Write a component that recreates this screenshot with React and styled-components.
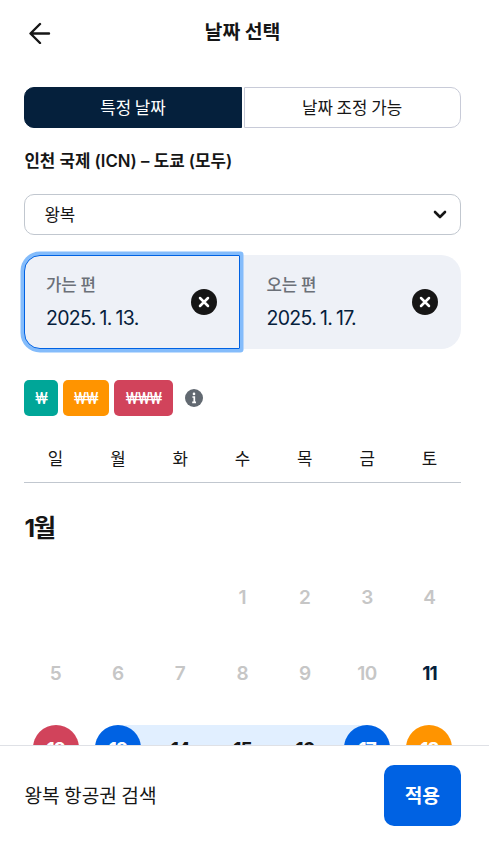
import React from "react";
import styled, { createGlobalStyle, css } from "styled-components";

const GlobalStyle = createGlobalStyle`
  * {
    box-sizing: border-box;
  }
  body {
    margin: 0;
    background: #fff;
    color: #161616;
    font-family: "Inter", "Noto Sans CJK KR", sans-serif;
  }
  button {
    margin: 0;
    padding: 0;
    border: 0;
    background: none;
    color: inherit;
    font: inherit;
    letter-spacing: inherit;
    cursor: pointer;
  }
`;

const Page = styled.div`
  display: flex;
  flex-direction: column;
  width: 489px;
  height: 845px;
  overflow: hidden;
`;

const Content = styled.main`
  flex: 1;
  min-height: 0;
  padding: 0 28.4px 0 24.4px;
  overflow: hidden;
`;

const Header = styled.header`
  display: grid;
  grid-template-columns: 30px 1fr 30px;
  align-items: center;
  height: 66px;
  margin-bottom: 21px;
`;

const BackButton = styled.button`
  display: flex;
  padding-left: 4.6px;
`;

const Title = styled.h1`
  margin: 0;
  padding-bottom: 4px;
  font-family: "Noto Sans CJK KR", sans-serif;
  font-size: 19.4px;
  font-weight: 700;
  line-height: 28px;
  text-align: center;
`;

const Tabs = styled.div`
  display: flex;
  gap: 2px;
  height: 41px;
`;

const Tab = styled.button`
  flex: 1;
  padding-bottom: 2px;
  border: 1px solid #c8cbd8;
  border-radius: 0 10px 10px 0;
  font-family: "Noto Sans CJK KR", sans-serif;
  font-size: 16.8px;
  line-height: 24px;
  ${(props) => props.$active && css`
    border-color: #05203c;
    border-radius: 10px 0 0 10px;
    background: #05203c;
    color: #fff;
  `}
`;

const Route = styled.h2`
  margin: 21px 0;
  font-size: 16.8px;
  font-weight: 600;
  line-height: 24px;
`;

const Select = styled.button`
  display: flex;
  align-items: center;
  justify-content: space-between;
  width: 100%;
  height: 41px;
  padding: 0 12.5px 1px 19px;
  border: 1px solid #c1c7cf;
  border-radius: 10px;
  font-size: 16.8px;
`;

const Dates = styled.div`
  display: flex;
  height: 94px;
  margin-top: 20px;
`;

const DateBox = styled.div`
  display: flex;
  flex: 1;
  align-items: center;
  justify-content: space-between;
  padding: 0 22.5px 0 26px;
  border-radius: 0 20px 20px 0;
  background: #eef1f7;
  ${(props) => props.$active && css`
    flex: 0 0 216px;
    padding: 0 22px 0 20.5px;
    border: 1.5px solid #0062e3;
    border-radius: 16px 1px 1px 16px;
    box-shadow: 0 0 0 3.5px #84bcfb;
    z-index: 1;
  `}
`;

const DateText = styled.div`
  padding-bottom: 2px;
`;

const DateLabel = styled.div`
  color: #6b7078;
  font-family: "Noto Sans CJK KR", sans-serif;
  font-size: 16.8px;
  font-weight: 500;
  line-height: 26px;
`;

const DateValue = styled.div`
  margin-top: 7px;
  color: #05203c;
  font-size: 19.5px;
  line-height: 28px;
  letter-spacing: -0.65px;
  word-spacing: -1.1px;
`;

const ClearButton = styled.button`
  display: flex;
  align-items: center;
  justify-content: center;
  width: 26px;
  height: 26px;
  border-radius: 50%;
  background: #161616;
`;

const Legend = styled.div`
  display: flex;
  align-items: center;
  gap: 5px;
  height: 36px;
  margin-top: 31px;
`;

const Price = styled.span`
  width: ${(props) => props.$width};
  height: 36px;
  border-radius: 5px;
  background: ${(props) => props.$color};
  color: #fff;
  font-family: "Roboto", sans-serif;
  font-size: 17px;
  font-weight: 400;
  line-height: 37px;
  letter-spacing: -0.7px;
  text-align: center;
`;

const InfoIcon = styled.svg`
  margin-left: 6.5px;
`;

const Week = styled.div`
  display: grid;
  grid-template-columns: repeat(7, 1fr);
`;

const Weekdays = styled(Week)`
  height: 49px;
  margin-top: 18px;
  padding-top: 12px;
  border-bottom: 1.5px solid #c1c7cf;
  font-size: 16.8px;
  line-height: 26px;
  text-align: center;
`;

const Month = styled.h3`
  margin: 26px 0 25.6px;
  font-size: 24.5px;
  font-weight: 700;
  line-height: 38px;
  letter-spacing: -1.4px;
`;

const DayCell = styled.div`
  display: flex;
  justify-content: center;
  height: 46px;
  margin-bottom: 30.3px;
  background: ${(props) => ({
    start: "linear-gradient(90deg, transparent 50%, #e1efff 50%)",
    middle: "#e1efff",
    end: "linear-gradient(90deg, #e1efff 50%, transparent 50%)",
  })[props.$range] || "none"};
`;

const Day = styled.span`
  width: 46px;
  height: 46px;
  border-radius: 50%;
  background: ${(props) => props.$fill || "none"};
  color: ${(props) => props.$color || "#c6c6c6"};
  font-size: 19px;
  font-weight: ${(props) => (props.$color ? 700 : 600)};
  line-height: 49px;
  letter-spacing: ${(props) => (props.$color ? "-1px" : "-0.3px")};
  text-align: center;
`;

const Footer = styled.footer`
  display: flex;
  flex: 0 0 100px;
  align-items: flex-start;
  justify-content: space-between;
  padding: 19.4px 28.4px 0 24.4px;
  border-top: 1px solid #dfe1e6;
  background: #fff;
`;

const Summary = styled.span`
  font-family: "Noto Sans CJK KR", sans-serif;
  font-size: 19.2px;
  line-height: 60px;
`;

const ApplyButton = styled.button`
  width: 76.5px;
  height: 61px;
  padding-bottom: 1px;
  border-radius: 10px;
  background: #0062e3;
  color: #fff;
  font-family: "Noto Sans CJK KR", sans-serif;
  font-size: 19.2px;
  font-weight: 700;
`;

const weekdays = ["일", "월", "화", "수", "목", "금", "토"];

const weeks = [
  [{}, {}, {}, { day: 1 }, { day: 2 }, { day: 3 }, { day: 4 }],
  [{ day: 5 }, { day: 6 }, { day: 7 }, { day: 8 }, { day: 9 }, { day: 10 }, { day: 11, color: "#05203c" }],
  [
    { day: 12, color: "#fff", fill: "#d1435b" },
    { day: 13, color: "#fff", fill: "#0062e3", range: "start" },
    { day: 14, color: "#161616", range: "middle" },
    { day: 15, color: "#161616", range: "middle" },
    { day: 16, color: "#161616", range: "middle" },
    { day: 17, color: "#fff", fill: "#0062e3", range: "end" },
    { day: 18, color: "#fff", fill: "#ff9400" },
  ],
];

function ClearDate() {
  return (
    <ClearButton aria-label="삭제">
      <svg width="12" height="12" viewBox="0 0 12 12" fill="none" stroke="#fff" strokeWidth="2.5" strokeLinecap="round">
        <path d="M2 2l8 8M10 2l-8 8" />
      </svg>
    </ClearButton>
  );
}

function TripDate({ label, value, active }) {
  return (
    <DateBox $active={active}>
      <DateText>
        <DateLabel>{label}</DateLabel>
        <DateValue>{value}</DateValue>
      </DateText>
      <ClearDate />
    </DateBox>
  );
}

function App() {
  return (
    <Page>
      <GlobalStyle />
      <Content>
        <Header>
          <BackButton aria-label="뒤로">
            <svg width="22" height="22" viewBox="0 0 22 22" fill="none" stroke="#161616" strokeWidth="2.4" strokeLinecap="round" strokeLinejoin="round">
              <path d="M20 11.5H2M11 2L1.5 11.5L11 21" />
            </svg>
          </BackButton>
          <Title>날짜 선택</Title>
        </Header>
        <Tabs>
          <Tab $active>특정 날짜</Tab>
          <Tab>날짜 조정 가능</Tab>
        </Tabs>
        <Route>인천 국제 (ICN) – 도쿄 (모두)</Route>
        <Select>
          왕복
          <svg width="14" height="9" viewBox="0 0 14 9" fill="none" stroke="#161616" strokeWidth="2.6" strokeLinecap="round" strokeLinejoin="round">
            <path d="M2 2l5 5l5-5" />
          </svg>
        </Select>
        <Dates>
          <TripDate label="가는 편" value="2025. 1. 13." active />
          <TripDate label="오는 편" value="2025. 1. 17." />
        </Dates>
        <Legend>
          <Price $width="33.5px" $color="#00a698">₩</Price>
          <Price $width="46px" $color="#ff9400">₩₩</Price>
          <Price $width="59.5px" $color="#d1435b">₩₩₩</Price>
          <InfoIcon width="18" height="18" viewBox="0 0 18 18">
            <circle cx="9" cy="9" r="9" fill="#626971" />
            <path d="M7.4 8h1.9v5.6M7.2 13.4h3.8" fill="none" stroke="#fff" strokeWidth="1.7" />
            <circle cx="9" cy="4.9" r="1.3" fill="#fff" />
          </InfoIcon>
        </Legend>
        <Weekdays>
          {weekdays.map((name) => (
            <span key={name}>{name}</span>
          ))}
        </Weekdays>
        <Month>1월</Month>
        {weeks.map((week, i) => (
          <Week key={i}>
            {week.map((item, j) => (
              <DayCell key={j} $range={item.range}>
                <Day $color={item.color} $fill={item.fill}>{item.day}</Day>
              </DayCell>
            ))}
          </Week>
        ))}
      </Content>
      <Footer>
        <Summary>왕복 항공권 검색</Summary>
        <ApplyButton>적용</ApplyButton>
      </Footer>
    </Page>
  );
}

export default App;
